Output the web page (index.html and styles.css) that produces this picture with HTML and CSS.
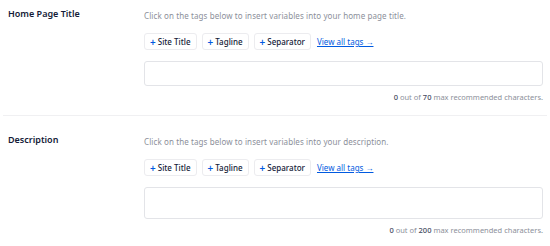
FILE: index.html
```html
<!DOCTYPE html>
<html lang="en">
<head>
  <meta charset="UTF-8">
  <title>Search Appearance</title>
  <link rel="stylesheet" href="styles.css">
</head>
<body>

  <div class="settings">

    <div class="setting-row">
      <div class="setting-label">Home Page Title</div>
      <div class="setting-content">
        <div class="setting-help">Click on the tags below to insert variables into your home page title.</div>
        <div class="tags">
          <span class="tag"><span class="plus">+</span>Site Title</span>
          <span class="tag"><span class="plus">+</span>Tagline</span>
          <span class="tag"><span class="plus">+</span>Separator</span>
          <a class="view-all" href="#">View all tags →</a>
        </div>
        <div class="field field-title"></div>
        <div class="char-count"><b>0</b> out of <b>70</b> max recommended characters.</div>
      </div>
    </div>

    <div class="setting-row">
      <div class="setting-label">Description</div>
      <div class="setting-content">
        <div class="setting-help">Click on the tags below to insert variables into your description.</div>
        <div class="tags">
          <span class="tag"><span class="plus">+</span>Site Title</span>
          <span class="tag"><span class="plus">+</span>Tagline</span>
          <span class="tag"><span class="plus">+</span>Separator</span>
          <a class="view-all" href="#">View all tags →</a>
        </div>
        <div class="field field-desc"></div>
        <div class="char-count"><b>0</b> out of <b>200</b> max recommended characters.</div>
      </div>
    </div>

  </div>

</body>
</html>
```

FILE: styles.css
```css
:root {
  --dark: #141b38;
  --muted: #8c8f9a;
  --blue: #005ae0;
  --line: #ececef;
}

body {
  margin: 0;
  background: #fff;
  font-family: 'Noto Sans', sans-serif;
  color: var(--dark);
}

.settings {
  padding: 0 3px;
}

.setting-row {
  display: grid;
  grid-template-columns: 136px 1fr;
  padding: 17px 4px 12px 5px;
  border-bottom: 1px solid #f0f0f2;
}

.setting-row:first-child {
  padding-top: 7px;
}

.setting-row:last-child {
  border-bottom: none;
}

.setting-label {
  font-size: 9px;
  font-weight: 600;
  line-height: 14px;
}

.setting-content {
  padding-top: 3px;
}

.setting-help {
  font-size: 8px;
  line-height: 11px;
  letter-spacing: 0.1px;
  color: var(--muted);
}

.tags {
  display: flex;
  align-items: center;
  gap: 5px;
  margin-top: 12px;
}

.tag {
  display: inline-flex;
  align-items: center;
  height: 15px;
  padding: 0 5px;
  border: 1px solid var(--line);
  border-radius: 3px;
  font-size: 8px;
  font-weight: 500;
}

.plus {
  color: var(--blue);
  font-size: 10px;
  font-weight: 600;
  margin-right: 2px;
  line-height: 1;
}

.view-all {
  color: var(--blue);
  font-size: 8px;
  margin-left: 1px;
}

.field {
  margin-top: 11px;
  border: 1px solid #e3e4e8;
  border-radius: 3px;
}

.field-title {
  height: 23px;
}

.field-desc {
  height: 30px;
}

.char-count {
  margin-top: 6px;
  text-align: right;
  font-size: 7.5px;
  line-height: 11px;
  color: var(--muted);
}

.char-count b {
  color: #434960;
  font-weight: 500;
}
```
